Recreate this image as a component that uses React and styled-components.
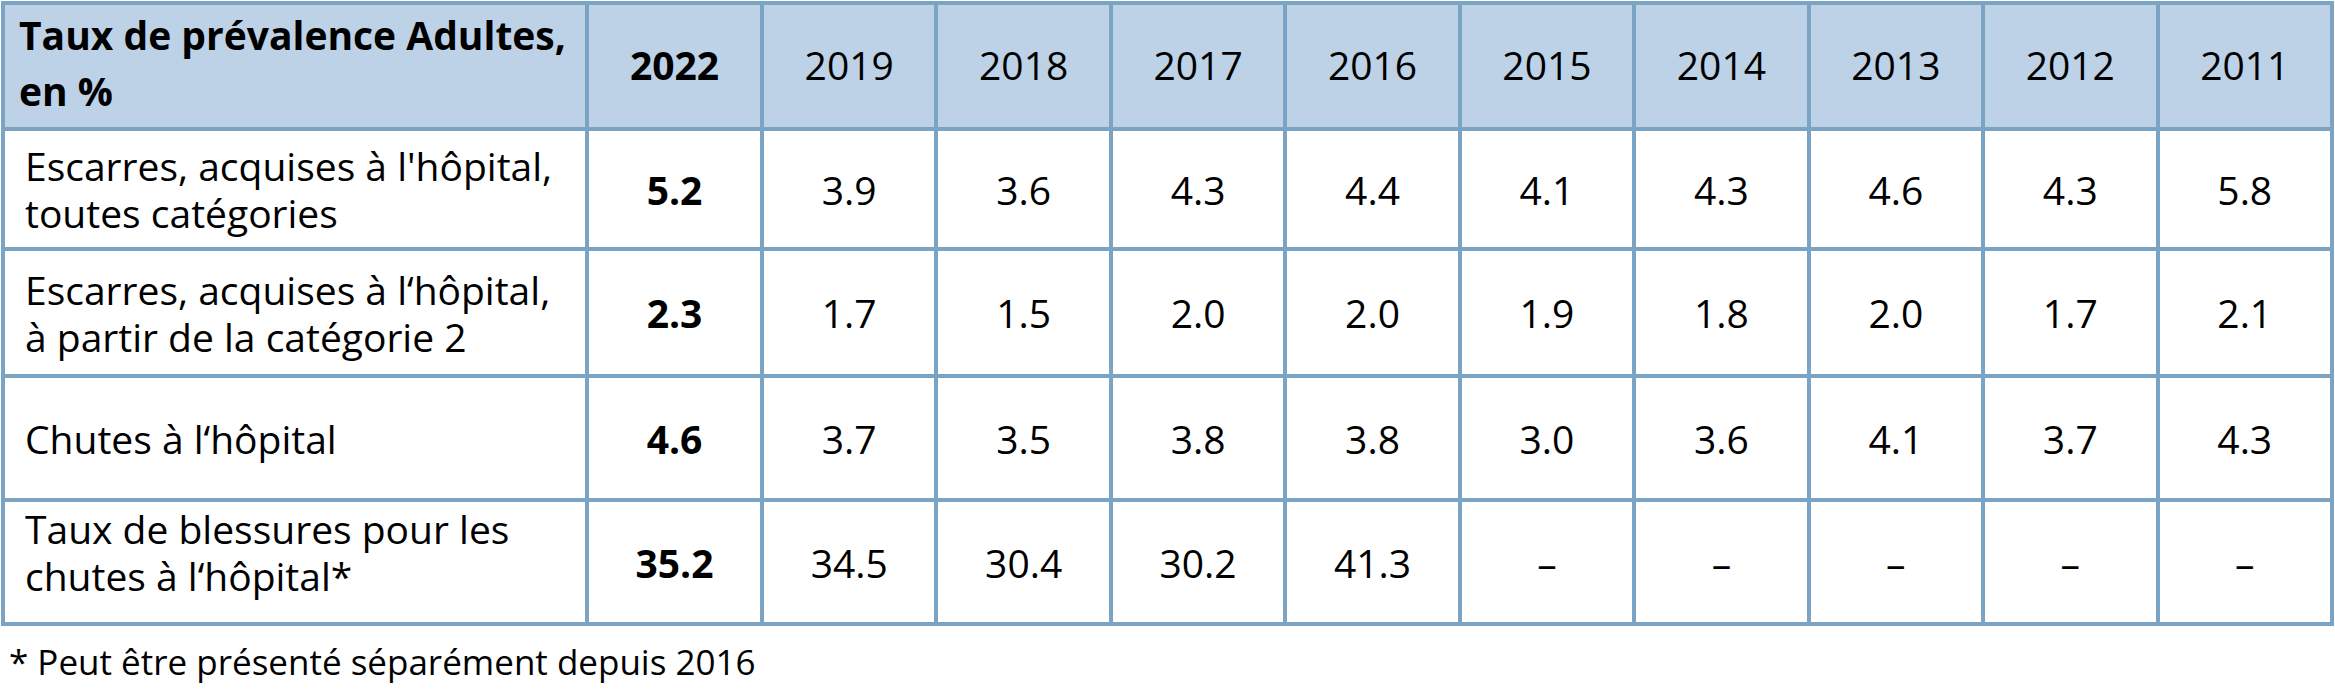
import styled, { createGlobalStyle } from "styled-components";

const GlobalStyle = createGlobalStyle`
  body {
    margin: 0;
    background: #ffffff;
    font-family: "Open Sans", "Noto Sans", sans-serif;
    color: #000000;
  }
`;

const years = ["2019", "2018", "2017", "2016", "2015", "2014", "2013", "2012", "2011"];

const rows = [
  {
    label: ["Escarres, acquises à l'hôpital,", "toutes catégories"],
    current: "5.2",
    values: ["3.9", "3.6", "4.3", "4.4", "4.1", "4.3", "4.6", "4.3", "5.8"],
    height: 120,
  },
  {
    label: ["Escarres, acquises à l‘hôpital,", "à partir de la catégorie 2"],
    current: "2.3",
    values: ["1.7", "1.5", "2.0", "2.0", "1.9", "1.8", "2.0", "1.7", "2.1"],
    height: 127,
  },
  {
    label: ["Chutes à l‘hôpital"],
    current: "4.6",
    values: ["3.7", "3.5", "3.8", "3.8", "3.0", "3.6", "4.1", "3.7", "4.3"],
    height: 124,
  },
  {
    label: ["Taux de blessures pour les", "chutes à l‘hôpital*"],
    current: "35.2",
    values: ["34.5", "30.4", "30.2", "41.3", "–", "–", "–", "–", "–"],
    height: 124,
    lift: 20,
  },
];

export default function App() {
  return (
    <>
      <GlobalStyle />
      <Page>
        <Table>
          <colgroup>
            <col style={{ width: 584 }} />
            <col style={{ width: 175 }} />
            {years.map((y) => (
              <col key={y} />
            ))}
          </colgroup>
          <thead>
            <HeadRow>
              <LabelHead>
                <Line>Taux de prévalence Adultes,</Line>
                <Line>en %</Line>
              </LabelHead>
              <YearHead bold>2022</YearHead>
              {years.map((y) => (
                <YearHead key={y}>{y}</YearHead>
              ))}
            </HeadRow>
          </thead>
          <tbody>
            {rows.map((row, index) => (
              <BodyRow key={index} h={row.height}>
                <LabelCell lift={row.lift || 0}>
                  {row.label.map((line, i) => (
                    <Line key={i}>{line}</Line>
                  ))}
                </LabelCell>
                <ValueCell bold>{row.current}</ValueCell>
                {row.values.map((v, i) => (
                  <ValueCell key={i}>{v}</ValueCell>
                ))}
              </BodyRow>
            ))}
          </tbody>
        </Table>
        <Footnote>* Peut être présenté séparément depuis 2016</Footnote>
      </Page>
    </>
  );
}

const Page = styled.div`
  width: 2335px;
  height: 697px;
  padding: 1px 0 0 1px;
  box-sizing: border-box;
`;

const Table = styled.table`
  width: 2333px;
  border-collapse: collapse;
  table-layout: fixed;
  border: 4px solid #7ba3c4;
`;

const HeadRow = styled.tr`
  height: 126px;
  background: #bdd2e6;
`;

const BodyRow = styled.tr`
  height: ${(p) => p.h}px;
  background: #ffffff;
`;

const cellBase = `
  border: 4px solid #7ba3c4;
  font-size: 39px;
  line-height: 47px;
  vertical-align: middle;
  padding: 0;
`;

const LabelHead = styled.th`
  ${cellBase}
  text-align: left;
  font-weight: 700;
  line-height: 56px;
  padding: 0 0 6px 14px;
`;

const YearHead = styled.th`
  ${cellBase}
  text-align: center;
  padding-bottom: 4px;
  font-weight: ${(p) => (p.bold ? 700 : 400)};
`;

const LabelCell = styled.td`
  ${cellBase}
  text-align: left;
  padding: 0 0 ${(p) => p.lift}px 20px;
`;

const Line = styled.div`
  white-space: nowrap;
`;

const ValueCell = styled.td`
  ${cellBase}
  text-align: center;
  font-weight: ${(p) => (p.bold ? 700 : 400)};
`;

const Footnote = styled.div`
  font-size: 35px;
  line-height: 44px;
  margin-top: 14px;
  padding-left: 8px;
`;
